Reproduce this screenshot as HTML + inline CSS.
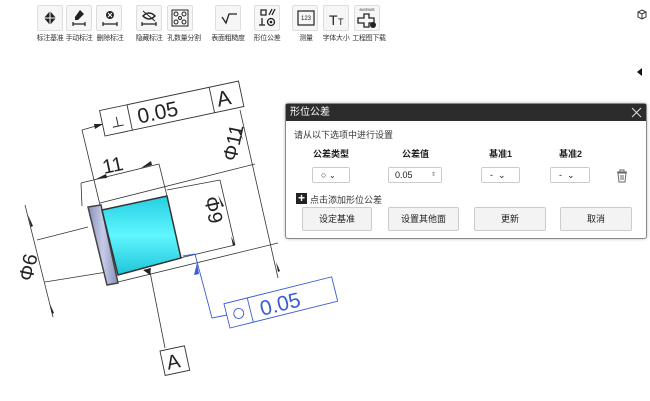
<!DOCTYPE html>
<html><head><meta charset="utf-8"><style>
body{margin:0;width:650px;height:401px;background:#fff;font-family:"Liberation Sans","Noto Sans CJK SC",sans-serif;position:relative;overflow:hidden}
.tb{position:absolute;top:5px;width:26px;height:26px;border:1px solid #ddd;border-radius:2px;background:#f6f6f6;box-sizing:border-box}
.lb{position:absolute;top:33px;font-size:7px;color:#333;white-space:nowrap;transform:translateX(-50%);letter-spacing:-0.3px}
.dlg{position:absolute;left:285px;top:103px;width:362px;height:136px;border:1px solid #888;border-radius:3px;background:#fff;box-sizing:border-box;box-shadow:0 0 3px rgba(0,0,0,.25)}
.tt{height:17px;background:#2c2c2c;color:#fff;font-size:10px;line-height:17px;padding-left:4px}
.t{position:absolute;font-size:9px;color:#333;white-space:nowrap}
.h{font-weight:bold;color:#222}
.sel{position:absolute;top:63px;height:16px;border:1px solid #ccc;border-radius:2px;box-sizing:border-box;font-size:9px;line-height:14px;color:#222}
.btn{position:absolute;top:103px;height:24px;border:1px solid #ccc;border-radius:2px;background:#f3f3f3;box-sizing:border-box;font-size:9px;line-height:22px;text-align:center;color:#222}
</style></head><body>
<div class="tb" style="left:37px"></div><div class="tb" style="left:66px"></div><div class="tb" style="left:96px"></div>
<div class="tb" style="left:136px"></div><div class="tb" style="left:167px"></div><div class="tb" style="left:215px"></div>
<div class="tb" style="left:254px"></div><div class="tb" style="left:292px"></div><div class="tb" style="left:323px"></div><div class="tb" style="left:354px"></div>
<svg style="position:absolute;left:0;top:0" width="400" height="32">
<g fill="#222" stroke="#222">
<path d="M50 11 L56 18 L50 25 L44 18Z" stroke="none"/><line x1="50" y1="9" x2="50" y2="27" stroke="#fff" stroke-width="1"/><line x1="41" y1="18" x2="59" y2="18" stroke="#fff"/>
<path d="M80 10 L84 14 L78 20 L75 20 L75 17Z" stroke="none"/><path d="M73 24h12M73 22v4M85 22v4" fill="none" stroke-width="1.2"/>
<circle cx="110" cy="15" r="4" stroke="none"/><path d="M108 13l4 4M112 13l-4 4" stroke="#fff"/><path d="M103 24h14M103 22v4M117 22v4" fill="none" stroke-width="1.2"/>
<path d="M143 16q6-6 12 0q-6 6-12 0Z" fill="none" stroke-width="1.5"/><line x1="143" y1="11" x2="155" y2="21"/><path d="M142 24h14M142 22v4M156 22v4" fill="none" stroke-width="1.2"/>
<rect x="172" y="10" width="16" height="16" fill="none"/><circle cx="176" cy="14" r="2" fill="none"/><circle cx="184" cy="14" r="2" fill="none"/><circle cx="176" cy="22" r="2" fill="none"/><circle cx="184" cy="22" r="2" fill="none"/><circle cx="180" cy="18" r="1.5" fill="none"/>
<path d="M222 17l4 6 3-9h8" fill="none" stroke-width="1.3"/>
<path d="M261 10h5v5h-5z M269 15l3-6M272 15l3-6 M262 18v7M259 25h6" fill="none" stroke-width="1.3"/><circle cx="271" cy="22" r="3.5" fill="none" stroke-width="1.3"/><circle cx="271" cy="22" r="1.3" stroke="none"/>
<rect x="298" y="11" width="16" height="14" fill="none" stroke-width="1.2"/><text x="306" y="20" font-size="6" text-anchor="middle" stroke="none">123</text>
<text x="329" y="25" font-size="14" stroke="none">T</text><text x="338" y="25" font-size="9" stroke="none">T</text>
<text x="367" y="11" font-size="4" text-anchor="middle" stroke="none">6VIEWS</text><path d="M358 18h6v-4h5v4h5v5h-5v4h-5v-4h-6z" fill="none" stroke-width="1.3"/><circle cx="373" cy="25" r="3" stroke="none"/>
</g></svg>
<div class="lb" style="left:50px">标注基准</div><div class="lb" style="left:79px">手动标注</div><div class="lb" style="left:110px">删除标注</div>
<div class="lb" style="left:149px">隐藏标注</div><div class="lb" style="left:184px">孔数量分割</div><div class="lb" style="left:228px">表面粗糙度</div>
<div class="lb" style="left:267px">形位公差</div><div class="lb" style="left:306px">测量</div><div class="lb" style="left:336px">字体大小</div><div class="lb" style="left:369px">工程图下载</div>
<svg style="position:absolute;left:636px;top:9px" width="12" height="12"><path d="M6 1l4 2v5l-4 2-4-2V3z M2 3l4 2 4-2 M6 5v5" fill="none" stroke="#333" stroke-width="1"/></svg>
<svg style="position:absolute;left:636px;top:67px" width="8" height="10"><path d="M6 1v8L1 5z" fill="#111"/></svg>

<svg style="position:absolute;left:0;top:0" width="650" height="401">
<defs><linearGradient id="cy" x1="0" y1="0" x2="0" y2="1"><stop offset="0" stop-color="#25cfe2"/><stop offset=".5" stop-color="#5ff6ff"/><stop offset="1" stop-color="#1fc4d8"/></linearGradient>
<linearGradient id="fl" x1="0" y1="0" x2="1" y2="0"><stop offset="0" stop-color="#8890b8"/><stop offset=".5" stop-color="#c6cce8"/><stop offset="1" stop-color="#8890b8"/></linearGradient></defs>
<g stroke="#333" stroke-width="0.8" fill="none">
<line x1="81" y1="183" x2="159" y2="164"/><line x1="159" y1="164" x2="167" y2="196"/><line x1="81" y1="183" x2="82" y2="206"/>
<line x1="82" y1="130" x2="100" y2="205"/><line x1="82" y1="130" x2="103" y2="124"/>
<line x1="100" y1="203" x2="255" y2="164"/><line x1="118" y1="282" x2="278" y2="243"/>
<line x1="240" y1="110" x2="278" y2="278"/>
<line x1="167" y1="190" x2="220" y2="180"/><line x1="220" y1="180" x2="235" y2="245"/><line x1="180" y1="258" x2="235" y2="245"/>
<line x1="25" y1="205" x2="53" y2="317"/><line x1="37" y1="240" x2="88" y2="227"/><line x1="45" y1="282" x2="107" y2="272"/>
<line x1="150" y1="272" x2="165" y2="348"/>
</g>
<g fill="#222">
<path d="M103 124l-9 0 1 5z"/><path d="M96 179l10-5 1 4z"/><path d="M141 168l11-3-1-4z"/>
<path d="M243 140l-3-10 -2 1z"/><path d="M276 262l2 10 2-1z"/><path d="M218 195l4 12 2-1z"/><path d="M231 236l2 10 2-1z"/>
<path d="M28 215l3 12 2-1z"/><path d="M49 302l3 12 2-1z"/><path d="M143 270l8 -2 -1 7z"/>
</g>
<polygon points="88,207 101,205 118,283 107,285" fill="url(#fl)" stroke="#444" stroke-width="1.5"/>
<polygon points="102,210 167,196 181,258 118,275" fill="url(#cy)" stroke="#333" stroke-width="1.5"/>
<g transform="translate(105,136) rotate(-12)" stroke="#333" stroke-width="0.9" fill="#fff">
<rect x="0" y="-26" width="142" height="26"/><line x1="28" y1="-26" x2="28" y2="0"/><line x1="112" y1="-26" x2="112" y2="0"/>
<g fill="#222" stroke="none" font-size="21"><text x="8" y="-6" font-size="14">⊥</text><text x="36" y="-5">0.05</text><text x="117" y="-5">A</text></g>
</g>
<text transform="translate(236,162) rotate(-78)" font-size="20" fill="#222">Φ11</text>
<text transform="translate(104,174) rotate(-12)" font-size="20" fill="#222">11</text>
<text transform="translate(204,198) rotate(78)" font-size="20" fill="#222">Φ9</text>
<text transform="translate(32,282) rotate(-78)" font-size="20" fill="#222">Φ6</text>
<g transform="translate(160,351) rotate(-12)"><rect x="0" y="0" width="25" height="25" fill="#fff" stroke="#333" stroke-width="0.9"/><text x="4" y="20" font-size="20" fill="#222">A</text></g>
<g stroke="#3a5bd6" stroke-width="0.9" fill="none"><polyline points="183,256 195,254 212,318 227,315"/></g>
<path d="M197 263l-3 12 5-1z" fill="#3a5bd6"/>
<g transform="translate(230,328) rotate(-14)" stroke="#3a5bd6" stroke-width="0.9" fill="#fff">
<rect x="0" y="-25" width="111" height="25"/><line x1="24" y1="-25" x2="24" y2="0"/><circle cx="12" cy="-12" r="5"/>
<text x="34" y="-4" font-size="21" fill="#3a5bd6" stroke="none">0.05</text></g>
</svg>

<div class="dlg"><div class="tt">形位公差</div>
<svg style="position:absolute;right:4px;top:3px" width="11" height="11"><path d="M1 1l9 9M10 1l-9 9" stroke="#ddd" stroke-width="1"/></svg>
<div class="t" style="left:8px;top:24px">请从以下选项中进行设置</div>
<div class="t h" style="left:27px;top:43px">公差类型</div><div class="t h" style="left:116px;top:43px">公差值</div>
<div class="t h" style="left:203px;top:43px">基准1</div><div class="t h" style="left:273px;top:43px">基准2</div>
<div class="sel" style="left:26px;width:38px;padding-left:8px">○ <span style="font-size:8px">&#8964;</span></div>
<div class="sel" style="left:102px;width:54px;padding-left:6px">0.05<span style="position:absolute;right:5px;font-size:6px;color:#777">⇕</span></div>
<div class="sel" style="left:195px;width:39px;padding-left:8px">- &nbsp;&#8964;</div>
<div class="sel" style="left:264px;width:40px;padding-left:8px">- &nbsp;&#8964;</div>
<svg style="position:absolute;left:330px;top:65px" width="12" height="14"><path d="M1 3h10M4 3V1h4v2M2 4h8l-1 9H3z M5 6v5M7 6v5" fill="none" stroke="#666" stroke-width="1"/></svg>
<div style="position:absolute;left:10px;top:89px;width:11px;height:11px;background:#222;color:#fff;font-size:12px;line-height:10px;text-align:center;font-weight:bold">+</div>
<div class="t" style="left:24px;top:89px">点击添加形位公差</div>
<div class="btn" style="left:16px;width:70px">设定基准</div><div class="btn" style="left:102px;width:71px">设置其他面</div>
<div class="btn" style="left:188px;width:72px">更新</div><div class="btn" style="left:274px;width:72px">取消</div>
</div>
</body></html>
